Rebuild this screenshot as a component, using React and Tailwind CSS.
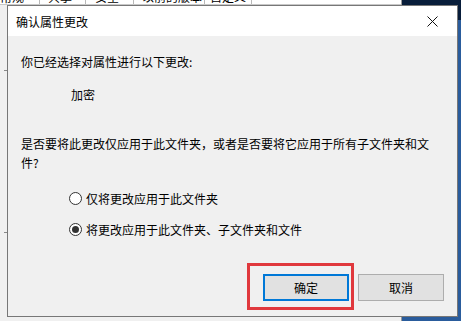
import React from "react";

const font = { fontFamily: '"Noto Sans CJK SC", "Noto Sans", sans-serif' };

function Radio({ checked, label }) {
  return (
    <div className="flex items-center h-[19px] pl-[61px]">
      <span className="w-[13px] h-[13px] rounded-full border border-[#333] bg-white flex items-center justify-center">
        {checked && <span className="w-[7px] h-[7px] rounded-full bg-[#333]" />}
      </span>
      <span className="ml-[4px]">{label}</span>
    </div>
  );
}

export default function App() {
  return (
    <div
      className="relative w-[461px] h-[321px] overflow-hidden bg-[#2a5c9c] text-[12px] text-black"
      style={font}
    >
      {/* desktop dark top-right */}
      <div className="absolute left-[402px] top-0 w-[60px] h-[20px] bg-[#081d3a]" />
      {/* background property window */}
      <div className="absolute left-0 top-0 w-[402px] h-[321px] bg-[#f0f0f0] border-r border-[#9a9a9a]">
        <div className="flex h-[5px] overflow-hidden border-b border-[#c8c8c8] bg-white">
          {["常规", "共享", "安全", "以前的版本", "自定义"].map((t, i) => (
            <div
              key={t}
              className={
                "h-[5px] overflow-hidden border-r border-[#b9b9b9] " +
                (i === 0 ? "w-[40px] pl-0" : i === 1 ? "w-[46px] pl-[8px]" : i === 2 ? "w-[48px] pl-[9px]" : i === 3 ? "w-[71px] pl-[8px]" : "w-[47px] pl-[5px]")
              }
            >
              <div className="mt-[-12px] leading-[17px] whitespace-nowrap">{t}</div>
            </div>
          ))}
        </div>
        <div className="absolute left-[4px] top-[70px] w-[3px] h-[1px] bg-[#888]" />
        <div className="absolute left-[4px] top-[232px] w-[3px] h-[1px] bg-[#888]" />
      </div>

      {/* dialog */}
      <div className="absolute left-[7px] top-[5px] w-[451px] h-[312px] border border-[#777] bg-[#f0f0f0] flex flex-col">
        <div className="h-[30px] bg-white flex items-center justify-between pl-[8px] pr-[15px] shrink-0">
          <span className="leading-[17px]">确认属性更改</span>
          <svg width="11" height="11" viewBox="0 0 11 11" className="mr-[4px]">
            <path d="M0.5 0.5 L10.5 10.5 M10.5 0.5 L0.5 10.5" stroke="#111" strokeWidth="1" fill="none" />
          </svg>
        </div>
        <div className="flex-1 pt-[16px] pl-[13px] pr-[13px] leading-[19px]">
          <div>你已经选择对属性进行以下更改:</div>
          <div className="mt-[14px] pl-[50px]">加密</div>
          <div className="mt-[30px] pr-[14px]">
            是否要将此更改仅应用于此文件夹，或者是否要将它应用于所有子文件夹和文件?
          </div>
          <div className="mt-[17px] -ml-[13px]">
            <Radio label="仅将更改应用于此文件夹" />
          </div>
          <div className="mt-[12px] -ml-[13px]">
            <Radio checked label="将更改应用于此文件夹、子文件夹和文件" />
          </div>
          <div className="mt-[35px] flex justify-end gap-[9px]">
            <div className="relative">
              <div className="absolute left-[-16px] right-[-5px] top-[-11px] bottom-[-9px] border-[3px] border-[#e0383d]" />
              <button className="relative w-[86px] h-[27px] border-2 border-[#0078d7] bg-[#e1e1e1] leading-[17px]">
                确定
              </button>
            </div>
            <button className="w-[86px] h-[27px] border border-[#adadad] bg-[#e1e1e1] leading-[17px]">
              取消
            </button>
          </div>
        </div>
      </div>
    </div>
  );
}
